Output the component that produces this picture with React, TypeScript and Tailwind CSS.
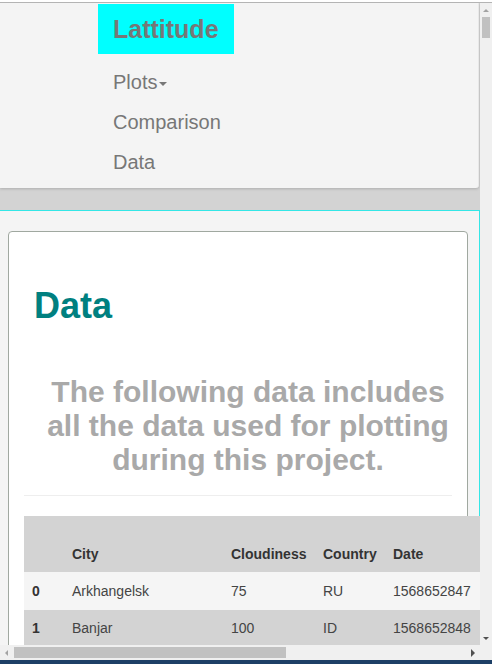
import React from 'react';

const rows = [
  { i: '0', city: 'Arkhangelsk', cloud: '75', country: 'RU', date: '1568652847' },
  { i: '1', city: 'Banjar', cloud: '100', country: 'ID', date: '1568652848' },
];

function Caret() {
  return <span className="inline-block ml-[2px] align-middle w-0 h-0 border-t-[4px] border-t-[#777] border-x-[4px] border-x-transparent" />;
}

export default function App() {
  return (
    <div className="w-[492px] h-[664px] overflow-hidden flex flex-col bg-white" style={{ fontFamily: '"Liberation Sans", Arial, sans-serif' }}>
      <div className="h-[2px] bg-white" />
      <div className="h-[1px] bg-[#b4b4b4]" />
      <div className="flex flex-1 min-h-0">
        <div className="w-[480px] h-full overflow-hidden bg-[#d3d3d3]">
          {/* navbar */}
          <nav className="h-[185px] w-[479px] bg-[#f4f4f4] rounded-br-[3px] shadow-[0_1px_3px_rgba(0,0,0,0.18)] border-r border-[#e8e8e8]">
            <div className="pl-[98px] pt-[1px]">
              <div className="inline-block bg-[#00ffff] h-[50px] px-[15px] text-[25px] leading-[50px] font-bold text-[#777]">Lattitude</div>
              <ul className="mt-[8px] pl-[15px] text-[20px] leading-[40px] text-[#777]">
                <li>Plots<Caret /></li>
                <li>Comparison</li>
                <li>Data</li>
              </ul>
            </div>
          </nav>
          <div className="h-[22px]" />
          {/* container */}
          <div className="bg-[#f4f4f4] border-t border-r border-[#33e6e6] pl-[8px] pr-[11px] pt-[20px] h-[600px]">
            <div className="bg-white border border-[#a0a8a0] rounded-[4px] px-[15px] pt-[54px] h-[600px]">
              <h1 className="pl-[10px] text-[36px] leading-[40px] font-bold text-[#008080]">Data</h1>
              <p className="mt-[49px] pl-[20px] text-center text-[30px] leading-[34px] font-bold text-[#a9a9a9]">
                The following data includes all the data used for plotting during this project.
              </p>
              <hr className="mt-[18px] border-t border-[#eeeeee]" />
              <table className="mt-[20px] text-[14px] border-collapse table-fixed w-[456px]">
                <colgroup>
                  <col className="w-[40px]" />
                  <col className="w-[159px]" />
                  <col className="w-[92px]" />
                  <col className="w-[70px]" />
                  <col className="w-[95px]" />
                </colgroup>
                <thead>
                  <tr className="bg-[#d3d3d3] text-[#333] text-left h-[56px]">
                    <th className="px-[8px] align-bottom pb-[7px]" />
                    <th className="px-[8px] align-bottom pb-[7px]">City</th>
                    <th className="px-[8px] align-bottom pb-[7px]">Cloudiness</th>
                    <th className="px-[8px] align-bottom pb-[7px]">Country</th>
                    <th className="px-[8px] align-bottom pb-[7px]">Date</th>
                  </tr>
                </thead>
                <tbody className="text-[#444]">
                  {rows.map((r, idx) => (
                    <tr key={r.i} className={idx % 2 === 0 ? 'bg-[#f5f5f5] h-[38px]' : 'bg-[#d3d3d3] h-[37px]'}>
                      <th className="px-[8px] text-left font-bold text-[#333]">{r.i}</th>
                      <td className="px-[8px]">{r.city}</td>
                      <td className="px-[8px]">{r.cloud}</td>
                      <td className="px-[8px]">{r.country}</td>
                      <td className="px-[8px]">{r.date}</td>
                    </tr>
                  ))}
                </tbody>
              </table>
            </div>
          </div>
        </div>
        {/* vertical scrollbar */}
        <div className="w-[12px] h-full bg-[#f0f0f0] flex flex-col items-center">
          <div className="h-[14px] flex items-center justify-center">
            <span className="w-0 h-0 border-b-[3px] border-b-[#a3a3a3] border-x-[3px] border-x-transparent" />
          </div>
          <div className="w-[8px] h-[21px] bg-[#c1c1c1]" />
          <div className="flex-1" />
          <div className="h-[14px] flex items-center justify-center">
            <span className="w-0 h-0 border-t-[3px] border-t-[#505050] border-x-[3px] border-x-transparent" />
          </div>
        </div>
      </div>
      {/* horizontal scrollbar */}
      <div className="h-[15px] flex bg-[#f0f0f0]">
        <div className="w-[480px] flex items-center">
          <div className="w-[12px] flex justify-center">
            <span className="w-0 h-0 border-r-[3px] border-r-[#a3a3a3] border-y-[3px] border-y-transparent" />
          </div>
          <div className="ml-[2px] w-[272px] h-[11px] bg-[#c1c1c1]" />
          <div className="flex-1" />
          <div className="w-[14px] flex justify-center">
            <span className="w-0 h-0 border-l-[4px] border-l-[#505050] border-y-[4px] border-y-transparent" />
          </div>
        </div>
        <div className="w-[12px] bg-[#f0f0f0]" />
      </div>
      <div className="h-[4px] bg-[#1d3f66]" />
    </div>
  );
}
